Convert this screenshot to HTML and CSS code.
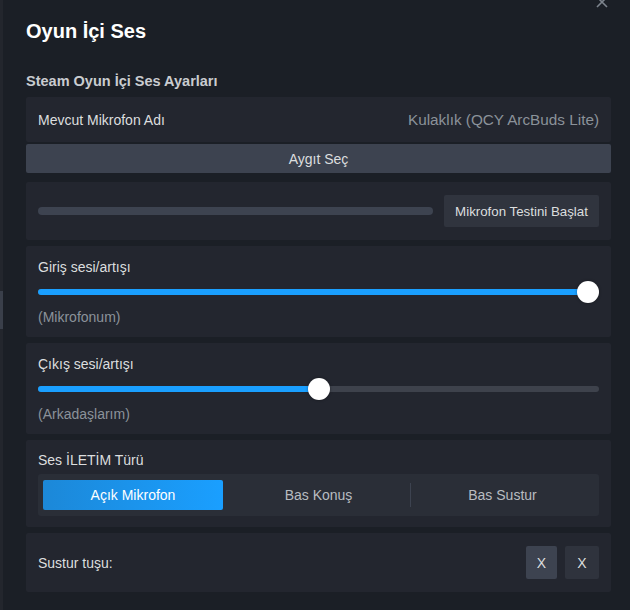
FILE: index.html
```html
<!DOCTYPE html>
<html lang="tr">
<head>
    <meta charset="UTF-8">
    <meta name="viewport" content="width=device-width, initial-scale=1.0">
    <title>Oyun İçi Ses</title>
    <link rel="stylesheet" href="styles.css">
</head>
<body>
    <div class="edge">
        <div class="edge-thumb"></div>
    </div>
    <div class="dialog">
        <button class="close-button" aria-label="Kapat">
            <svg width="12" height="12" viewBox="0 0 12 12">
                <path d="M1 1 L11 11 M11 1 L1 11" stroke="currentColor" stroke-width="1.6" fill="none"/>
            </svg>
        </button>

        <h1>Oyun İçi Ses</h1>
        <h2>Steam Oyun İçi Ses Ayarları</h2>

        <!-- Mikrofon -->
        <div class="panel mic-name">
            <span class="label">Mevcut Mikrofon Adı</span>
            <span class="device">Kulaklık (QCY ArcBuds Lite)</span>
        </div>
        <button class="wide-button">Aygıt Seç</button>

        <div class="panel mic-test">
            <div class="meter"></div>
            <button class="flat-button">Mikrofon Testini Başlat</button>
        </div>

        <!-- Ses seviyeleri -->
        <div class="panel">
            <div class="label">Giriş sesi/artışı</div>
            <div class="slider">
                <div class="slider-track">
                    <div class="slider-fill" style="width: 98%"></div>
                    <div class="slider-thumb" style="left: 98%"></div>
                </div>
            </div>
            <div class="hint">(Mikrofonum)</div>
        </div>

        <div class="panel">
            <div class="label">Çıkış sesi/artışı</div>
            <div class="slider">
                <div class="slider-track">
                    <div class="slider-fill" style="width: 50%"></div>
                    <div class="slider-thumb" style="left: 50%"></div>
                </div>
            </div>
            <div class="hint">(Arkadaşlarım)</div>
        </div>

        <!-- İletim türü -->
        <div class="panel transmit">
            <div class="label">Ses İLETİM Türü</div>
            <div class="segments">
                <button class="segment active">Açık Mikrofon</button>
                <button class="segment">Bas Konuş</button>
                <button class="segment divided">Bas Sustur</button>
            </div>
        </div>

        <div class="panel mute-key">
            <span class="label">Sustur tuşu:</span>
            <div class="key-buttons">
                <button class="key-button primary">X</button>
                <button class="key-button">X</button>
            </div>
        </div>
    </div>
</body>
</html>
```

FILE: styles.css
```css
/* Styles généraux */
* {
    box-sizing: border-box;
}

body {
    margin: 0;
    padding: 0;
    width: 630px;
    height: 610px;
    overflow: hidden;
    display: flex;
    background-color: #1b1f26;
    font-family: 'Liberation Sans', Arial, sans-serif;
    font-size: 14px;
    color: #dcdedf;
}

button {
    font-family: inherit;
    border: none;
    cursor: pointer;
}

/* Bord gauche */
.edge {
    width: 3px;
    flex-shrink: 0;
    background-color: #23262d;
}

.edge-thumb {
    margin-top: 291px;
    height: 38px;
    background-color: #3a3f4a;
}

.dialog {
    position: relative;
    width: 608px;
    padding: 19px 0 0 23px;
}

.close-button {
    position: absolute;
    top: -4px;
    right: 3px;
    padding: 0;
    background: none;
    color: #7d848d;
    display: flex;
}

h1 {
    margin: 0;
    font-size: 20px;
    line-height: 24px;
    font-weight: bold;
    color: #ffffff;
}

h2 {
    margin: 28px 0 6px;
    font-size: 14.5px;
    line-height: 20px;
    font-weight: bold;
    color: #c9ccd0;
}

.panel {
    width: 585px;
    background-color: #23262f;
    border-radius: 2px;
    padding: 11px 12px 10px;
    margin-bottom: 6px;
}

.label {
    line-height: 20px;
    color: #dcdedf;
}

/* Mikrofon */
.mic-name {
    height: 45px;
    padding: 0 12px;
    margin-bottom: 2px;
    display: flex;
    justify-content: space-between;
    align-items: center;
}

.device {
    font-size: 15.3px;
    color: #8b929a;
}

.wide-button {
    display: block;
    width: 585px;
    height: 29px;
    margin-bottom: 9px;
    background-color: #3d4350;
    border-radius: 2px;
    color: #dcdedf;
    font-size: 14px;
}

.mic-test {
    height: 58px;
    padding: 0 12px;
    display: flex;
    align-items: center;
    gap: 11px;
}

.meter {
    flex-grow: 1;
    height: 8px;
    border-radius: 4px;
    background-color: #3d4350;
}

.flat-button {
    width: 155px;
    height: 32px;
    background-color: #30343e;
    border-radius: 2px;
    color: #dcdedf;
    font-size: 13.3px;
}

/* Slider */
.slider {
    height: 30px;
    display: flex;
    align-items: center;
}

.slider-track {
    position: relative;
    width: 100%;
    height: 6px;
    border-radius: 3px;
    background-color: #3e424c;
}

.slider-fill {
    height: 100%;
    border-radius: 3px;
    background-color: #1a9fff;
}

.slider-thumb {
    position: absolute;
    top: 50%;
    width: 22px;
    height: 22px;
    margin: -11px 0 0 -11px;
    border-radius: 50%;
    background-color: #ffffff;
    box-shadow: 0 0 3px rgba(0, 0, 0, 0.4);
}

.hint {
    line-height: 20px;
    color: #8b929a;
}

/* İletim türü */
.transmit {
    padding: 10px 12px 11px;
}

.segments {
    margin-top: 4px;
    display: flex;
    padding: 6px 5px;
    background-color: #2a2e37;
    border-radius: 3px;
}

.segment {
    flex: 1;
    height: 30px;
    background: none;
    color: #b8bcc1;
    font-size: 14px;
}

.segment.active {
    flex: 0 0 180px;
    margin-right: 4px;
    background: linear-gradient(to right, #1c88d8, #1a9fff);
    border-radius: 2px;
    color: #ffffff;
}

.segment.divided {
    border-left: 1px solid #3d4350;
    height: 24px;
    margin-top: 3px;
}

/* Sustur tuşu */
.mute-key {
    height: 59px;
    padding: 0 12px;
    display: flex;
    justify-content: space-between;
    align-items: center;
}

.key-buttons {
    display: flex;
    gap: 8px;
}

.key-button {
    width: 34px;
    height: 33px;
    background-color: #2f333d;
    border-radius: 2px;
    color: #dcdedf;
    font-size: 14px;
}

.key-button.primary {
    width: 31px;
    background-color: #3d4350;
}
```
